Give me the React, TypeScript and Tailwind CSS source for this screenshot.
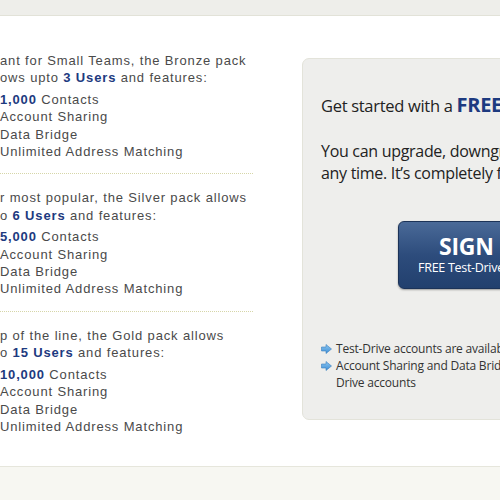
import React from "react";

type Pack = {
  intro: string;
  intro2Pre: string;
  users: string;
  contacts: string;
};

const packs: Pack[] = [
  { intro: "ant for Small Teams, the Bronze pack", intro2Pre: "ows upto ", users: "3 Users", contacts: "1,000" },
  { intro: "r most popular, the Silver pack allows", intro2Pre: "o ", users: "6 Users", contacts: "5,000" },
  { intro: "p of the line, the Gold pack allows", intro2Pre: "o ", users: "15 Users", contacts: "10,000" },
];

function Arrow() {
  return (
    <svg width="11" height="10" viewBox="0 0 11 10" className="mt-[4px] shrink-0">
      <defs>
        <linearGradient id="ag" x1="0" y1="0" x2="0" y2="1">
          <stop offset="0" stopColor="#8cc6f0" />
          <stop offset="1" stopColor="#3f8fd6" />
        </linearGradient>
      </defs>
      <path d="M0.5 3 H5 V0.5 L10.5 5 L5 9.5 V7 H0.5 Z" fill="url(#ag)" stroke="#3a7fc0" strokeWidth="0.6" />
    </svg>
  );
}

export default function App() {
  return (
    <div className="flex h-[500px] w-[500px] flex-col overflow-hidden bg-white">
      <div className="h-[16px] shrink-0 border-b border-[#e2e2d8] bg-[#eeeeea]" />

      <div className="flex h-[450px] shrink-0">
        {/* packs */}
        <div
          className="w-[253px] shrink-0 pt-[36px] text-[13px] leading-[17.4px] tracking-[0.85px] text-[#4a4a4a]"
          style={{ fontFamily: '"Liberation Sans", Arial, sans-serif' }}
        >
          {packs.map((p, i) => (
            <div
              key={p.users}
              className={
                i < packs.length - 1
                  ? "mb-[15px] border-b border-dotted border-[#d6d6a8] pb-[13px]"
                  : ""
              }
            >
              <p className="whitespace-nowrap">{p.intro}</p>
              <p className="whitespace-nowrap">
                {p.intro2Pre}
                <b className="text-[#1d3a80]">{p.users}</b> and features:
              </p>
              <ul className="mt-[4px] whitespace-nowrap">
                <li>
                  <b className="text-[#1d3a80]">{p.contacts}</b> Contacts
                </li>
                <li>Account Sharing</li>
                <li>Data Bridge</li>
                <li>Unlimited Address Matching</li>
              </ul>
            </div>
          ))}
        </div>

        {/* test drive box */}
        <div
          className="ml-[49px] mt-[42px] h-[362px] w-[320px] shrink-0 rounded-[7px] border border-[#e3e3da] bg-[#eeeeec] pl-[18px] pt-[35px] text-[#222]"
          style={{ fontFamily: '"Open Sans", "Noto Sans", sans-serif' }}
        >
          <p className="whitespace-nowrap text-[16.5px] leading-[22px] tracking-[-0.3px]">
            Get started with a <b className="text-[20px] text-[#1d3a80]">FREE Test-Drive</b>
          </p>
          <p className="mt-[23px] whitespace-nowrap text-[16px] leading-[22px] tracking-[-0.3px]">
            You can upgrade, downgrade or cancel at
            <br />
            any time. It’s completely free to try.
          </p>
          <div className="ml-[77px] mt-[37px] flex h-[68px] w-[174px] flex-col items-center justify-center rounded-[6px] border border-[#1c3358] bg-gradient-to-b from-[#4a6a98] via-[#2d4c7c] to-[#22406e] text-white shadow-[0_1px_2px_rgba(0,0,0,0.35)]">
            <span className="text-[23px] font-bold leading-[25px] tracking-[-0.2px]">SIGN UP</span>
            <span className="whitespace-nowrap text-[12.5px] leading-[17px] tracking-[-0.3px]">FREE Test-Drive Account</span>
          </div>
          <ul className="mt-[51px] text-[12px] leading-[17px] tracking-[-0.2px] text-[#333]">
            <li className="flex gap-[4px] whitespace-nowrap">
              <Arrow />
              <span>Test-Drive accounts are available for 30 days</span>
            </li>
            <li className="flex gap-[4px] whitespace-nowrap">
              <Arrow />
              <span>
                Account Sharing and Data Bridging are not available
                <br />
                Drive accounts
              </span>
            </li>
          </ul>
        </div>
      </div>

      <div className="flex-1 border-t border-[#e6e6dc] bg-[#f7f7f2]" />
    </div>
  );
}
